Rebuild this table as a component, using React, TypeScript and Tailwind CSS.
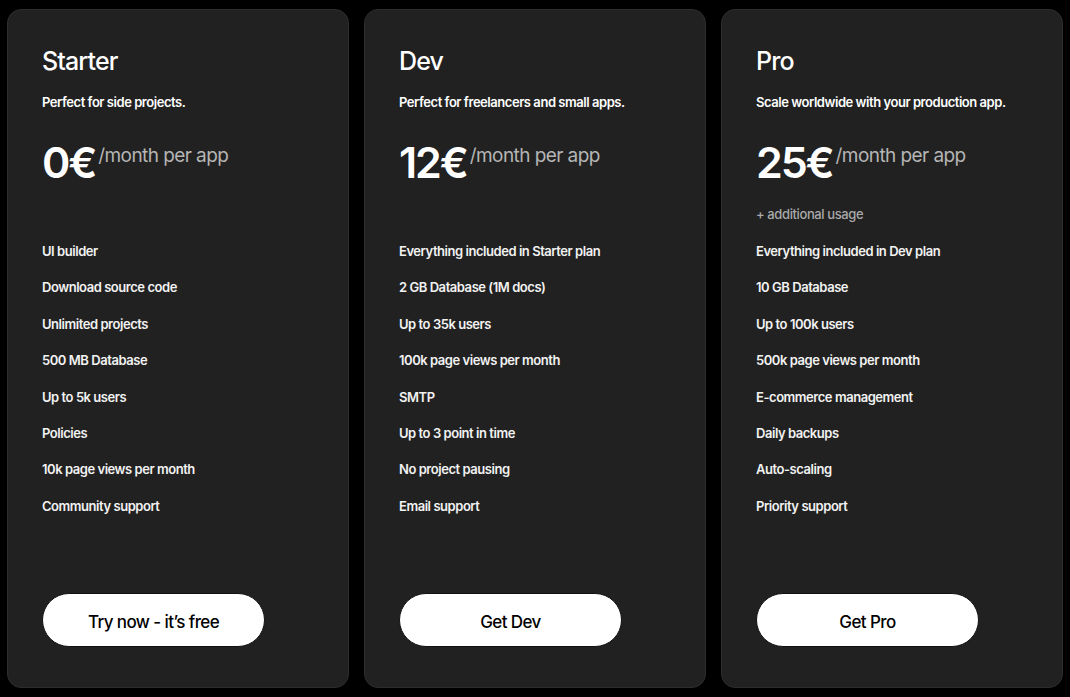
const plans = [
  {
    name: 'Starter',
    desc: 'Perfect for side projects.',
    price: '0€',
    extra: '',
    features: [
      'UI builder',
      'Download source code',
      'Unlimited projects',
      '500 MB Database',
      'Up to 5k users',
      'Policies',
      '10k page views per month',
      'Community support',
    ],
    cta: 'Try now - it’s free',
  },
  {
    name: 'Dev',
    desc: 'Perfect for freelancers and small apps.',
    price: '12€',
    extra: '',
    features: [
      'Everything included in Starter plan',
      '2 GB Database (1M docs)',
      'Up to 35k users',
      '100k page views per month',
      'SMTP',
      'Up to 3 point in time',
      'No project pausing',
      'Email support',
    ],
    cta: 'Get Dev',
  },
  {
    name: 'Pro',
    desc: 'Scale worldwide with your production app.',
    price: '25€',
    extra: '+ additional usage',
    features: [
      'Everything included in Dev plan',
      '10 GB Database',
      'Up to 100k users',
      '500k page views per month',
      'E-commerce management',
      'Daily backups',
      'Auto-scaling',
      'Priority support',
    ],
    cta: 'Get Pro',
  },
]

export default function App() {
  return (
    <div
      className="flex h-[697px] w-[1070px] gap-[15px] bg-black px-[7px] py-[9px] text-white"
      style={{ fontFamily: 'Inter, "Noto Sans", sans-serif' }}
    >
      {plans.map((plan) => (
        <div
          key={plan.name}
          className="flex w-[342px] flex-col rounded-[14px] border border-[#2d2d2d] bg-[#212121] px-[34px] pt-[36px] pb-[40px]"
        >
          <h3 className="text-[25px] leading-[30px] font-medium tracking-[-0.035em]">{plan.name}</h3>
          <p className="mt-4 text-[13px] leading-5 font-semibold tracking-[-0.035em]">{plan.desc}</p>

          <div className="mt-[29px] flex items-start">
            <span className="text-[43px] leading-[43px] font-semibold tracking-[-0.05em]">{plan.price}</span>
            <span className="mt-[5px] ml-[3px] text-[19px] leading-[19px] tracking-[-0.03em] text-[#b5b5b5]">
              /month per app
            </span>
          </div>

          <p className="mt-5 h-5 text-[13px] leading-5 font-medium tracking-[-0.03em] text-[#a9a9a9]">
            {plan.extra}
          </p>

          <ul className="mt-[17px] flex flex-col gap-[16.4px]">
            {plan.features.map((f) => (
              <li key={f} className="text-[13px] leading-5 font-semibold tracking-[-0.035em] text-[#f2f2f2]">
                {f}
              </li>
            ))}
          </ul>

          <button className="mt-auto flex h-[54px] w-[223px] items-center justify-center rounded-full border border-[#111] bg-white pt-[5px] text-[17px] font-medium tracking-[-0.035em] text-black">
            {plan.cta}
          </button>
        </div>
      ))}
    </div>
  )
}
